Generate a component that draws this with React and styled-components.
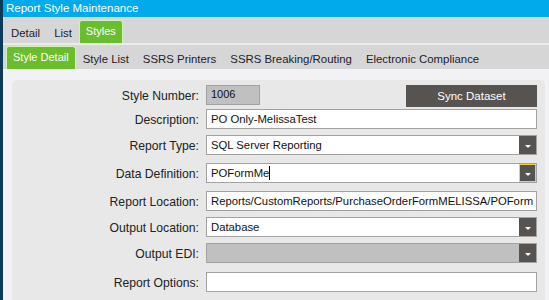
import React from "react";
import styled, { createGlobalStyle } from "styled-components";

const GlobalStyle = createGlobalStyle`
  html, body {
    margin: 0;
    padding: 0;
    overflow: hidden;
    background: #f2f2f4;
  }
  body {
    font-family: "Liberation Sans", Arial, sans-serif;
  }
`;

const Window = styled.div`
  width: 549px;
  height: 300px;
  display: flex;
  flex-direction: column;
  border-left: 3px solid #0c3a58;
  box-sizing: border-box;
  background: #f2f2f4;
`;

const TitleBar = styled.div`
  height: 17px;
  flex: none;
  background: #00aaeb;
  color: #fff;
  font-size: 11.5px;
  line-height: 17px;
  padding-left: 3px;
`;

const TabBand = styled.div`
  flex: none;
  display: flex;
  align-items: flex-end;
  height: ${(p) => p.h}px;
  padding-left: ${(p) => p.pad}px;
  background: #d6d6d6;
  border-bottom: ${(p) => (p.sep ? "2px solid #ececec" : "none")};
`;

const Tab = styled.div`
  font-size: 11.4px;
  padding: 0 7px;
  line-height: 20px;
  color: #1c1c2c;
  white-space: nowrap;
`;

const ActiveTab = styled.div`
  font-size: 11px;
  padding: 0 6px;
  height: ${(p) => p.h}px;
  line-height: ${(p) => p.h - 3}px;
  color: #fff;
  background: #6abd2c;
  border: 1px solid #d4efbf;
  border-bottom: none;
  border-radius: 3px 3px 0 0;
  box-sizing: border-box;
  white-space: nowrap;
`;

const Content = styled.div`
  flex: 1;
  display: flex;
  padding: 11px 4px 0 9px;
  min-height: 0;
`;

const Panel = styled.div`
  flex: 1;
  background: #e8e8e8;
  border-radius: 5px 5px 0 0;
  padding: 5px 8px 0 0;
  display: grid;
  grid-template-columns: 187px 1fr;
  column-gap: 7px;
  align-content: start;
`;

const Label = styled.div`
  text-align: right;
  font-size: 12.2px;
  color: #222;
  height: ${(p) => p.h}px;
  line-height: ${(p) => p.h + 2}px;
  margin-top: ${(p) => p.space}px;
  white-space: nowrap;
`;

const Field = styled.div`
  display: flex;
  justify-content: space-between;
  align-items: flex-start;
  height: ${(p) => p.h}px;
  margin-top: ${(p) => p.space}px;
  min-width: 0;
`;

const Box = styled.div`
  position: relative;
  height: 20px;
  width: ${(p) => (p.w ? `${p.w}px` : "100%")};
  box-sizing: border-box;
  border: 1px solid #a2a2a2;
  background: ${(p) => (p.disabled ? "#c0c0c0" : "#fff")};
  font-size: ${(p) => (p.small ? "11px" : "11.3px")};
  line-height: ${(p) => (p.small ? "16px" : "18px")};
  color: #111;
  padding-left: 4px;
  padding-right: ${(p) => (p.select ? "20px" : "0")};
  white-space: nowrap;
  overflow: hidden;
`;

const Caret = styled.span`
  display: inline-block;
  width: 1px;
  height: 14px;
  background: #000;
  vertical-align: -3px;
`;

const DropButton = styled.div`
  position: absolute;
  top: 0;
  right: 0;
  width: 17px;
  height: 18px;
  box-sizing: border-box;
  background: #575350;
  border: ${(p) => (p.focus ? "1px solid #f2d040" : "none")};
  display: flex;
  align-items: center;
  justify-content: center;
  &::after {
    content: "";
    margin-top: 2px;
    border-left: 3px solid transparent;
    border-right: 3px solid transparent;
    border-top: 3px solid #fff;
  }
`;

const SyncButton = styled.div`
  width: 131px;
  height: 22px;
  background: #575350;
  color: #fff;
  font-size: 11.5px;
  line-height: 22px;
  text-align: center;
`;

const rows = [
  { label: "Style Number:", value: "1006", number: true, h: 22, space: 0 },
  { label: "Description:", value: "PO Only-MelissaTest", h: 20, space: 2 },
  { label: "Report Type:", value: "SQL Server Reporting", select: true, h: 20, space: 6 },
  { label: "Data Definition:", value: "POFormMe", select: true, focus: true, h: 20, space: 8 },
  {
    label: "Report Location:",
    value: "Reports/CustomReports/PurchaseOrderFormMELISSA/POForm",
    h: 20,
    space: 8,
  },
  { label: "Output Location:", value: "Database", select: true, h: 20, space: 6 },
  { label: "Output EDI:", value: "", select: true, disabled: true, h: 20, space: 6 },
  { label: "Report Options:", value: "", h: 20, space: 9 },
];

export default () => {
  return (
    <>
      <GlobalStyle />
      <Window>
        <TitleBar>Report Style Maintenance</TitleBar>
        <TabBand h={26} pad={1} sep>
          <Tab>Detail</Tab>
          <Tab>List</Tab>
          <ActiveTab h={23}>Styles</ActiveTab>
        </TabBand>
        <TabBand h={24} pad={3}>
          <ActiveTab h={23}>Style Detail</ActiveTab>
          <Tab>Style List</Tab>
          <Tab>SSRS Printers</Tab>
          <Tab>SSRS Breaking/Routing</Tab>
          <Tab>Electronic Compliance</Tab>
        </TabBand>
        <Content>
          <Panel>
            {rows.map((row) => (
              <React.Fragment key={row.label}>
                <Label h={20} space={row.space}>
                  {row.label}
                </Label>
                <Field h={row.h} space={row.space}>
                  {row.number ? (
                    <>
                      <Box w={54} disabled small>
                        {row.value}
                      </Box>
                      <SyncButton>Sync Dataset</SyncButton>
                    </>
                  ) : (
                    <Box select={row.select} disabled={row.disabled}>
                      {row.value}
                      {row.focus && <Caret />}
                      {row.select && <DropButton focus={row.focus} />}
                    </Box>
                  )}
                </Field>
              </React.Fragment>
            ))}
          </Panel>
        </Content>
      </Window>
    </>
  );
};
